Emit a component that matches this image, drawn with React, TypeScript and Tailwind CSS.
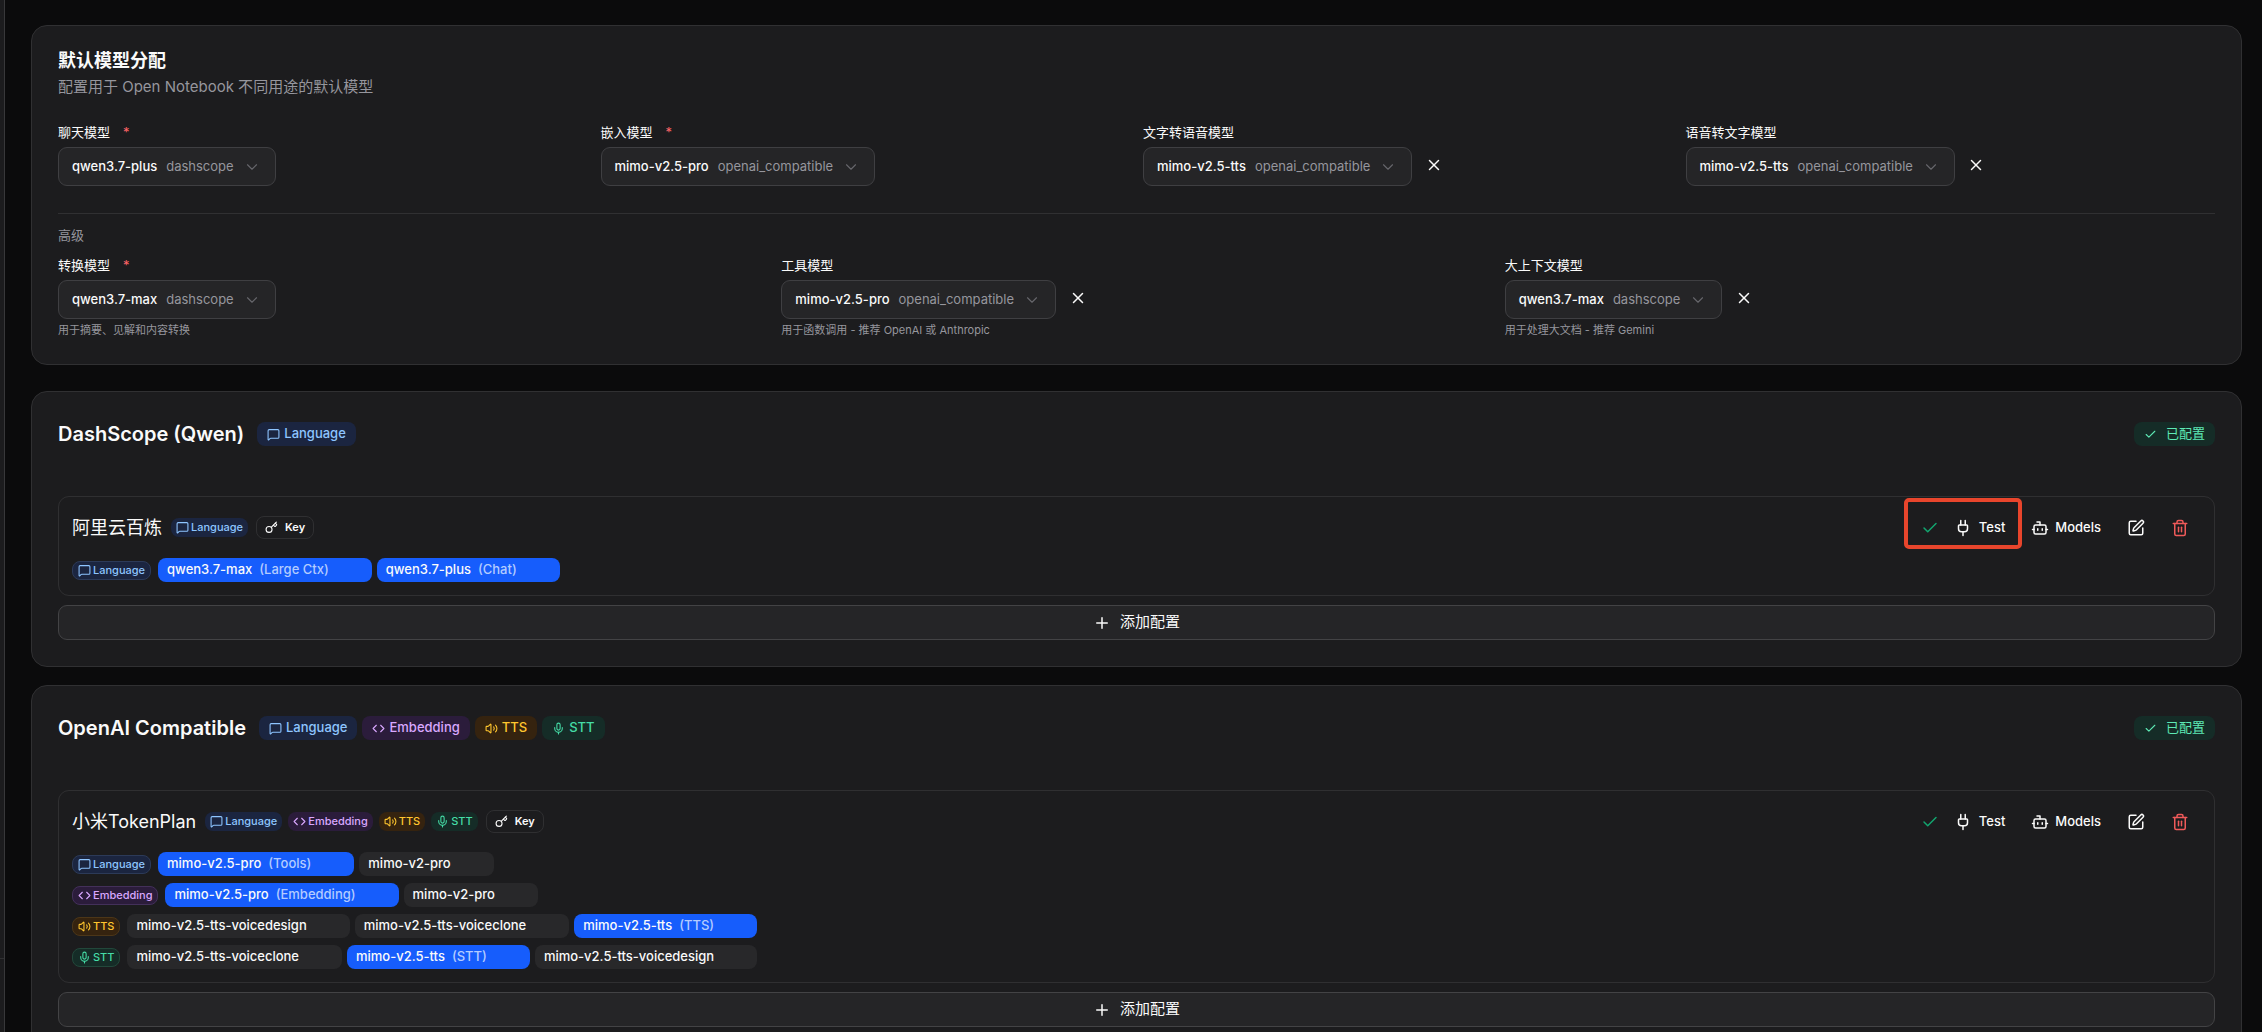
import type { ReactNode } from "react";
import {
  Bot,
  Check,
  ChevronDown,
  Code,
  Key,
  MessageSquare,
  Mic,
  Plug,
  Plus,
  SquarePen,
  Trash2,
  Volume2,
  X,
} from "lucide-react";
import clsx from "clsx";

type Kind = "language" | "embedding" | "tts" | "stt";

type ModelField = {
  id: string;
  label: string;
  model: string;
  provider: string;
  required?: boolean;
  clearable?: boolean;
  help?: string;
};

type Model = { name: string; role?: string };

type Provider = {
  title: string;
  kinds: Kind[];
  config: string;
  highlightTest?: boolean;
  groups: { kind: Kind; models: Model[] }[];
};

const kindMeta = {
  language: { label: "Language", icon: MessageSquare, color: "bg-[#1b2540] text-[#8ec5ff]", border: "border-[#2c3a58]" },
  embedding: { label: "Embedding", icon: Code, color: "bg-[#2b1c3b] text-[#d9a8ff]", border: "border-[#43305a]" },
  tts: { label: "TTS", icon: Volume2, color: "bg-[#35230f] text-[#ffc62e]", border: "border-[#4c3618]" },
  stt: { label: "STT", icon: Mic, color: "bg-[#152c27] text-[#45dca6]", border: "border-[#22483b]" },
};

const basicFields: ModelField[] = [
  { id: "chat", label: "聊天模型", model: "qwen3.7-plus", provider: "dashscope", required: true },
  { id: "embedding", label: "嵌入模型", model: "mimo-v2.5-pro", provider: "openai_compatible", required: true },
  { id: "tts", label: "文字转语音模型", model: "mimo-v2.5-tts", provider: "openai_compatible", clearable: true },
  { id: "stt", label: "语音转文字模型", model: "mimo-v2.5-tts", provider: "openai_compatible", clearable: true },
];

const advancedFields: ModelField[] = [
  { id: "transform", label: "转换模型", model: "qwen3.7-max", provider: "dashscope", required: true, help: "用于摘要、见解和内容转换" },
  { id: "tools", label: "工具模型", model: "mimo-v2.5-pro", provider: "openai_compatible", clearable: true, help: "用于函数调用 - 推荐 OpenAI 或 Anthropic" },
  { id: "large", label: "大上下文模型", model: "qwen3.7-max", provider: "dashscope", clearable: true, help: "用于处理大文档 - 推荐 Gemini" },
];

const providers: Provider[] = [
  {
    title: "DashScope (Qwen)",
    kinds: ["language"],
    config: "阿里云百炼",
    highlightTest: true,
    groups: [
      {
        kind: "language",
        models: [
          { name: "qwen3.7-max", role: "Large Ctx" },
          { name: "qwen3.7-plus", role: "Chat" },
        ],
      },
    ],
  },
  {
    title: "OpenAI Compatible",
    kinds: ["language", "embedding", "tts", "stt"],
    config: "小米TokenPlan",
    groups: [
      { kind: "language", models: [{ name: "mimo-v2.5-pro", role: "Tools" }, { name: "mimo-v2-pro" }] },
      { kind: "embedding", models: [{ name: "mimo-v2.5-pro", role: "Embedding" }, { name: "mimo-v2-pro" }] },
      {
        kind: "tts",
        models: [
          { name: "mimo-v2.5-tts-voicedesign" },
          { name: "mimo-v2.5-tts-voiceclone" },
          { name: "mimo-v2.5-tts", role: "TTS" },
        ],
      },
      {
        kind: "stt",
        models: [
          { name: "mimo-v2.5-tts-voiceclone" },
          { name: "mimo-v2.5-tts", role: "STT" },
          { name: "mimo-v2.5-tts-voicedesign" },
        ],
      },
    ],
  },
];

function Card({ children }: { children: ReactNode }) {
  return <section className="rounded-2xl border border-[#303032] bg-[#1c1c1e] px-[26px]">{children}</section>;
}

function ModelSelect({ field }: { field: ModelField }) {
  return (
    <div>
      <label htmlFor={field.id} className="flex h-5 items-center gap-[13px] text-[13px]">
        {field.label}
        {field.required && <span className="text-[#ff6467]">*</span>}
      </label>
      <div className="mt-1 flex items-start gap-1">
        <div className="relative flex h-[39px] items-center rounded-[9px] border border-[#3f3f42] bg-[#252527] pr-[14px] pl-[13px] text-[13px]">
          <span className="font-medium">{field.model}</span>
          <span className="ml-[9px] text-[#96969d]">{field.provider}</span>
          <ChevronDown className="ml-[9px] size-[18px] text-[#66666b]" strokeWidth={1.5} />
          <select id={field.id} className="absolute inset-0 w-full cursor-pointer opacity-0">
            <option>{field.model}</option>
          </select>
        </div>
        {field.clearable && (
          <button aria-label="Clear" className="flex size-[35px] items-center justify-center rounded-lg hover:bg-white/10">
            <X className="size-[18px]" />
          </button>
        )}
      </div>
      {field.help && <p className="mt-[3px] text-[11px] leading-4 text-[#96969d]">{field.help}</p>}
    </div>
  );
}

function KindBadge({ kind, size = "sm", bordered }: { kind: Kind; size?: "sm" | "md"; bordered?: boolean }) {
  const { label, icon: Icon, color, border } = kindMeta[kind];
  return (
    <span
      className={clsx(
        "flex shrink-0 items-center font-medium",
        color,
        size === "md" ? "h-6 gap-1 rounded-lg px-[10px] text-[13px]" : "h-[19px] gap-[2px] rounded-lg px-[5px] text-[11px]",
        bordered && ["border", border],
      )}
    >
      <Icon className="size-[13px]" />
      {label}
    </span>
  );
}

function ModelChip({ model }: { model: Model }) {
  return (
    <span
      className={clsx(
        "flex h-6 items-center gap-[7px] rounded-lg pr-[43px] pl-[9px] text-[13px] font-medium",
        model.role ? "bg-[#165dfc]" : "bg-[#28282a]",
      )}
    >
      {model.name}
      {model.role && <span className="text-[#b3cbff]">({model.role})</span>}
    </span>
  );
}

function ProviderCard({ provider }: { provider: Provider }) {
  return (
    <Card>
      <div className="flex h-[104px] items-start justify-between pt-[30px]">
        <div className="flex items-center gap-[13px]">
          <h2 className="text-xl leading-6 font-semibold">{provider.title}</h2>
          <div className="flex gap-[5px]">
            {provider.kinds.map((kind) => (
              <KindBadge key={kind} kind={kind} size="md" />
            ))}
          </div>
        </div>
        <span className="flex h-6 items-center gap-[9px] rounded-lg bg-[#152c27] px-[10px] text-[13px] text-[#5ee9b5]">
          <Check className="size-[13px]" />
          已配置
        </span>
      </div>

      <div className="rounded-[11px] border border-[#2f2f31] py-[13px] pr-3 pl-[13px]">
        <div className="flex h-[35px] items-center justify-between">
          <div className="flex items-center">
            <h3 className="mr-[9px] text-lg leading-6">{provider.config}</h3>
            <div className="flex gap-[6px]">
              {provider.kinds.map((kind) => (
                <KindBadge key={kind} kind={kind} />
              ))}
            </div>
            <span className="ml-2 flex h-[23px] items-center gap-[7px] rounded-lg border border-[#2f2f31] px-2 text-[11px] font-semibold">
              <Key className="size-[13px]" />
              Key
            </span>
          </div>

          <div className="flex items-center text-[13px] font-medium">
            <div className="relative flex items-center">
              <Check className="size-[18px] text-[#12a56f]" />
              <button className="flex h-[35px] items-center gap-[7px] rounded-lg pr-[13px] pl-[15px] hover:bg-white/10">
                <Plug className="size-[18px]" />
                Test
              </button>
              {provider.highlightTest && (
                <span className="pointer-events-none absolute -top-3 -right-1 -left-[17px] h-[51px] rounded-[5px] border-4 border-[#e8452c]" />
              )}
            </div>
            <button className="flex h-[35px] items-center gap-[6px] rounded-lg px-[13px] hover:bg-white/10">
              <Bot className="size-[18px]" />
              Models
            </button>
            <button aria-label="Edit" className="flex h-[35px] w-11 items-center justify-center rounded-lg hover:bg-white/10">
              <SquarePen className="size-[18px]" />
            </button>
            <button aria-label="Delete" className="flex h-[35px] w-11 items-center justify-center rounded-lg text-[#f05a5a] hover:bg-white/10">
              <Trash2 className="size-[18px]" />
            </button>
          </div>
        </div>

        <div className="mt-[13px] flex flex-col gap-[7px]">
          {provider.groups.map((group) => (
            <div key={group.kind} className="flex items-center gap-[7px]">
              <KindBadge kind={group.kind} bordered />
              <div className="flex gap-[5px]">
                {group.models.map((model) => (
                  <ModelChip key={model.name} model={model} />
                ))}
              </div>
            </div>
          ))}
        </div>
      </div>

      <button className="mt-[9px] mb-[26px] flex h-[35px] w-full items-center justify-center gap-[9px] rounded-[9px] border border-[#434345] bg-[#252527] text-[15px] hover:bg-[#2e2e30]">
        <Plus className="size-[18px]" />
        添加配置
      </button>
    </Card>
  );
}

export default function App() {
  return (
    <div className="flex h-screen overflow-hidden bg-[#0b0b0c] font-['Inter','Noto_Sans_CJK_SC',sans-serif] text-[#fafafa]">
      <aside className="flex w-[5px] shrink-0 flex-col justify-end border-r border-[#38383a] bg-[#1c1c1e]">
        <div className="h-[74px] border-t border-[#303032]" />
      </aside>
      <main className="min-w-0 flex-1 overflow-hidden pt-[25px] pr-5 pl-[26px]">
        <Card>
          <header className="pt-[23px]">
            <h2 className="text-lg leading-6 font-bold">默认模型分配</h2>
            <p className="mt-1 text-[15px] leading-5 text-[#96969d]">配置用于 Open Notebook 不同用途的默认模型</p>
          </header>
          <div className="mt-[26px] grid grid-cols-4 gap-[13px]">
            {basicFields.map((field) => (
              <ModelSelect key={field.id} field={field} />
            ))}
          </div>
          <div className="mt-[27px] border-t border-[#303032] pt-[11px] pb-[26px]">
            <h3 className="mb-[11px] text-[13px] leading-5 text-[#96969d]">高级</h3>
            <div className="grid grid-cols-3 gap-[13px]">
              {advancedFields.map((field) => (
                <ModelSelect key={field.id} field={field} />
              ))}
            </div>
          </div>
        </Card>

        <div className="mt-[26px] flex flex-col gap-[18px]">
          {providers.map((provider) => (
            <ProviderCard key={provider.title} provider={provider} />
          ))}
        </div>
      </main>
    </div>
  );
}
